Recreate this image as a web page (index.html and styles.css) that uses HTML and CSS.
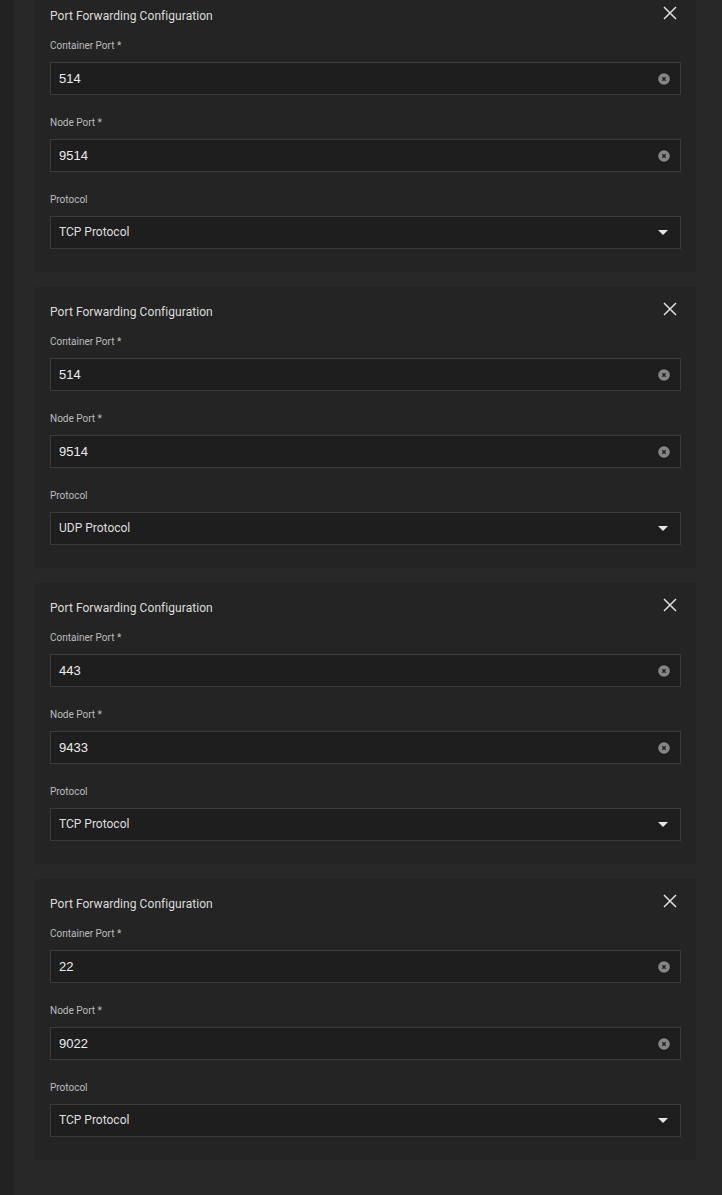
FILE: index.html
```html
<!DOCTYPE html>
<html lang="en">
<head>
<meta charset="utf-8">
<title>Port Forwarding</title>
<link rel="stylesheet" href="styles.css">
</head>
<body>
<div class="shell">
  <div class="rail"></div>
  <main class="panel">
    <div class="list">
      <section class="card">
        <div class="card-head">
          <span class="card-title">Port Forwarding Configuration</span>
          <svg class="close" viewBox="0 0 14 14" width="14" height="14"><path d="M1 1L13 13M13 1L1 13" stroke="#e0e0e0" stroke-width="1.5" fill="none"/></svg>
        </div>
        <div class="field">
          <label class="label">Container Port *</label>
          <div class="input"><span class="value">514</span><span class="clear"><svg viewBox="0 0 12 12" width="12" height="12"><circle cx="6" cy="6" r="5.8" fill="#858585"/><path d="M4.3 4.3L7.7 7.7M7.7 4.3L4.3 7.7" stroke="#222" stroke-width="1.4"/></svg></span></div>
        </div>
        <div class="field">
          <label class="label">Node Port *</label>
          <div class="input"><span class="value">9514</span><span class="clear"><svg viewBox="0 0 12 12" width="12" height="12"><circle cx="6" cy="6" r="5.8" fill="#858585"/><path d="M4.3 4.3L7.7 7.7M7.7 4.3L4.3 7.7" stroke="#222" stroke-width="1.4"/></svg></span></div>
        </div>
        <div class="field">
          <label class="label">Protocol</label>
          <div class="input select"><span class="sel-value">TCP Protocol</span><span class="caret"></span></div>
        </div>
      </section>

      <section class="card">
        <div class="card-head">
          <span class="card-title">Port Forwarding Configuration</span>
          <svg class="close" viewBox="0 0 14 14" width="14" height="14"><path d="M1 1L13 13M13 1L1 13" stroke="#e0e0e0" stroke-width="1.5" fill="none"/></svg>
        </div>
        <div class="field">
          <label class="label">Container Port *</label>
          <div class="input"><span class="value">514</span><span class="clear"><svg viewBox="0 0 12 12" width="12" height="12"><circle cx="6" cy="6" r="5.8" fill="#858585"/><path d="M4.3 4.3L7.7 7.7M7.7 4.3L4.3 7.7" stroke="#222" stroke-width="1.4"/></svg></span></div>
        </div>
        <div class="field">
          <label class="label">Node Port *</label>
          <div class="input"><span class="value">9514</span><span class="clear"><svg viewBox="0 0 12 12" width="12" height="12"><circle cx="6" cy="6" r="5.8" fill="#858585"/><path d="M4.3 4.3L7.7 7.7M7.7 4.3L4.3 7.7" stroke="#222" stroke-width="1.4"/></svg></span></div>
        </div>
        <div class="field">
          <label class="label">Protocol</label>
          <div class="input select"><span class="sel-value">UDP Protocol</span><span class="caret"></span></div>
        </div>
      </section>

      <section class="card">
        <div class="card-head">
          <span class="card-title">Port Forwarding Configuration</span>
          <svg class="close" viewBox="0 0 14 14" width="14" height="14"><path d="M1 1L13 13M13 1L1 13" stroke="#e0e0e0" stroke-width="1.5" fill="none"/></svg>
        </div>
        <div class="field">
          <label class="label">Container Port *</label>
          <div class="input"><span class="value">443</span><span class="clear"><svg viewBox="0 0 12 12" width="12" height="12"><circle cx="6" cy="6" r="5.8" fill="#858585"/><path d="M4.3 4.3L7.7 7.7M7.7 4.3L4.3 7.7" stroke="#222" stroke-width="1.4"/></svg></span></div>
        </div>
        <div class="field">
          <label class="label">Node Port *</label>
          <div class="input"><span class="value">9433</span><span class="clear"><svg viewBox="0 0 12 12" width="12" height="12"><circle cx="6" cy="6" r="5.8" fill="#858585"/><path d="M4.3 4.3L7.7 7.7M7.7 4.3L4.3 7.7" stroke="#222" stroke-width="1.4"/></svg></span></div>
        </div>
        <div class="field">
          <label class="label">Protocol</label>
          <div class="input select"><span class="sel-value">TCP Protocol</span><span class="caret"></span></div>
        </div>
      </section>

      <section class="card">
        <div class="card-head">
          <span class="card-title">Port Forwarding Configuration</span>
          <svg class="close" viewBox="0 0 14 14" width="14" height="14"><path d="M1 1L13 13M13 1L1 13" stroke="#e0e0e0" stroke-width="1.5" fill="none"/></svg>
        </div>
        <div class="field">
          <label class="label">Container Port *</label>
          <div class="input"><span class="value">22</span><span class="clear"><svg viewBox="0 0 12 12" width="12" height="12"><circle cx="6" cy="6" r="5.8" fill="#858585"/><path d="M4.3 4.3L7.7 7.7M7.7 4.3L4.3 7.7" stroke="#222" stroke-width="1.4"/></svg></span></div>
        </div>
        <div class="field">
          <label class="label">Node Port *</label>
          <div class="input"><span class="value">9022</span><span class="clear"><svg viewBox="0 0 12 12" width="12" height="12"><circle cx="6" cy="6" r="5.8" fill="#858585"/><path d="M4.3 4.3L7.7 7.7M7.7 4.3L4.3 7.7" stroke="#222" stroke-width="1.4"/></svg></span></div>
        </div>
        <div class="field">
          <label class="label">Protocol</label>
          <div class="input select"><span class="sel-value">TCP Protocol</span><span class="caret"></span></div>
        </div>
      </section>
    </div>
  </main>
</div>
</body>
</html>
```

FILE: styles.css
```css
html, body {
  margin: 0;
  padding: 0;
  height: 100%;
  background: #282828;
  overflow: hidden;
}

.shell {
  display: flex;
  min-height: 100vh;
  font-family: Roboto, "Liberation Sans", sans-serif;
}

.rail {
  width: 13px;
  flex: none;
  background: #222222;
}

.panel {
  flex: 1;
  background: #282828;
  padding-left: 22px;
}

.list {
  display: flex;
  flex-direction: column;
  gap: 15px;
  width: 661px;
  margin-top: -9px;
}

.card {
  background: #242424;
  padding: 16px 15px 23px;
  display: flex;
  flex-direction: column;
}

.card-head {
  display: flex;
  justify-content: space-between;
  align-items: flex-start;
  height: 16px;
  margin-bottom: 15px;
}

.card-title {
  font-size: 12px;
  line-height: 16px;
  padding-top: 1px;
  letter-spacing: 0.06px;
  color: #dcdcdc;
}

.close {
  display: block;
  margin-top: -1px;
  margin-right: 4px;
}

.field {
  display: flex;
  flex-direction: column;
}

.field + .field {
  margin-top: 20px;
}

.label {
  font-size: 10px;
  line-height: 14px;
  padding-top: 1px;
  margin-bottom: 9px;
  color: #bdbdbd;
}

.input {
  box-sizing: border-box;
  height: 33px;
  background: #1e1e1e;
  border: 1px solid #3a3a3a;
  display: flex;
  align-items: center;
  justify-content: space-between;
  padding: 0 10px 0 8px;
}

.value {
  font-family: "Liberation Sans", Arial, sans-serif;
  font-size: 13px;
  color: #ececec;
}

.clear {
  display: flex;
  align-items: center;
  padding-top: 1px;
}

.clear svg {
  display: block;
}

.sel-value {
  font-size: 12px;
  color: #dedede;
}

.select {
  padding-right: 12px;
  padding-bottom: 2px;
}

.caret {
  width: 0;
  height: 0;
  margin-top: 2px;
  border-left: 5px solid transparent;
  border-right: 5px solid transparent;
  border-top: 5px solid #e6e6e6;
}
```
